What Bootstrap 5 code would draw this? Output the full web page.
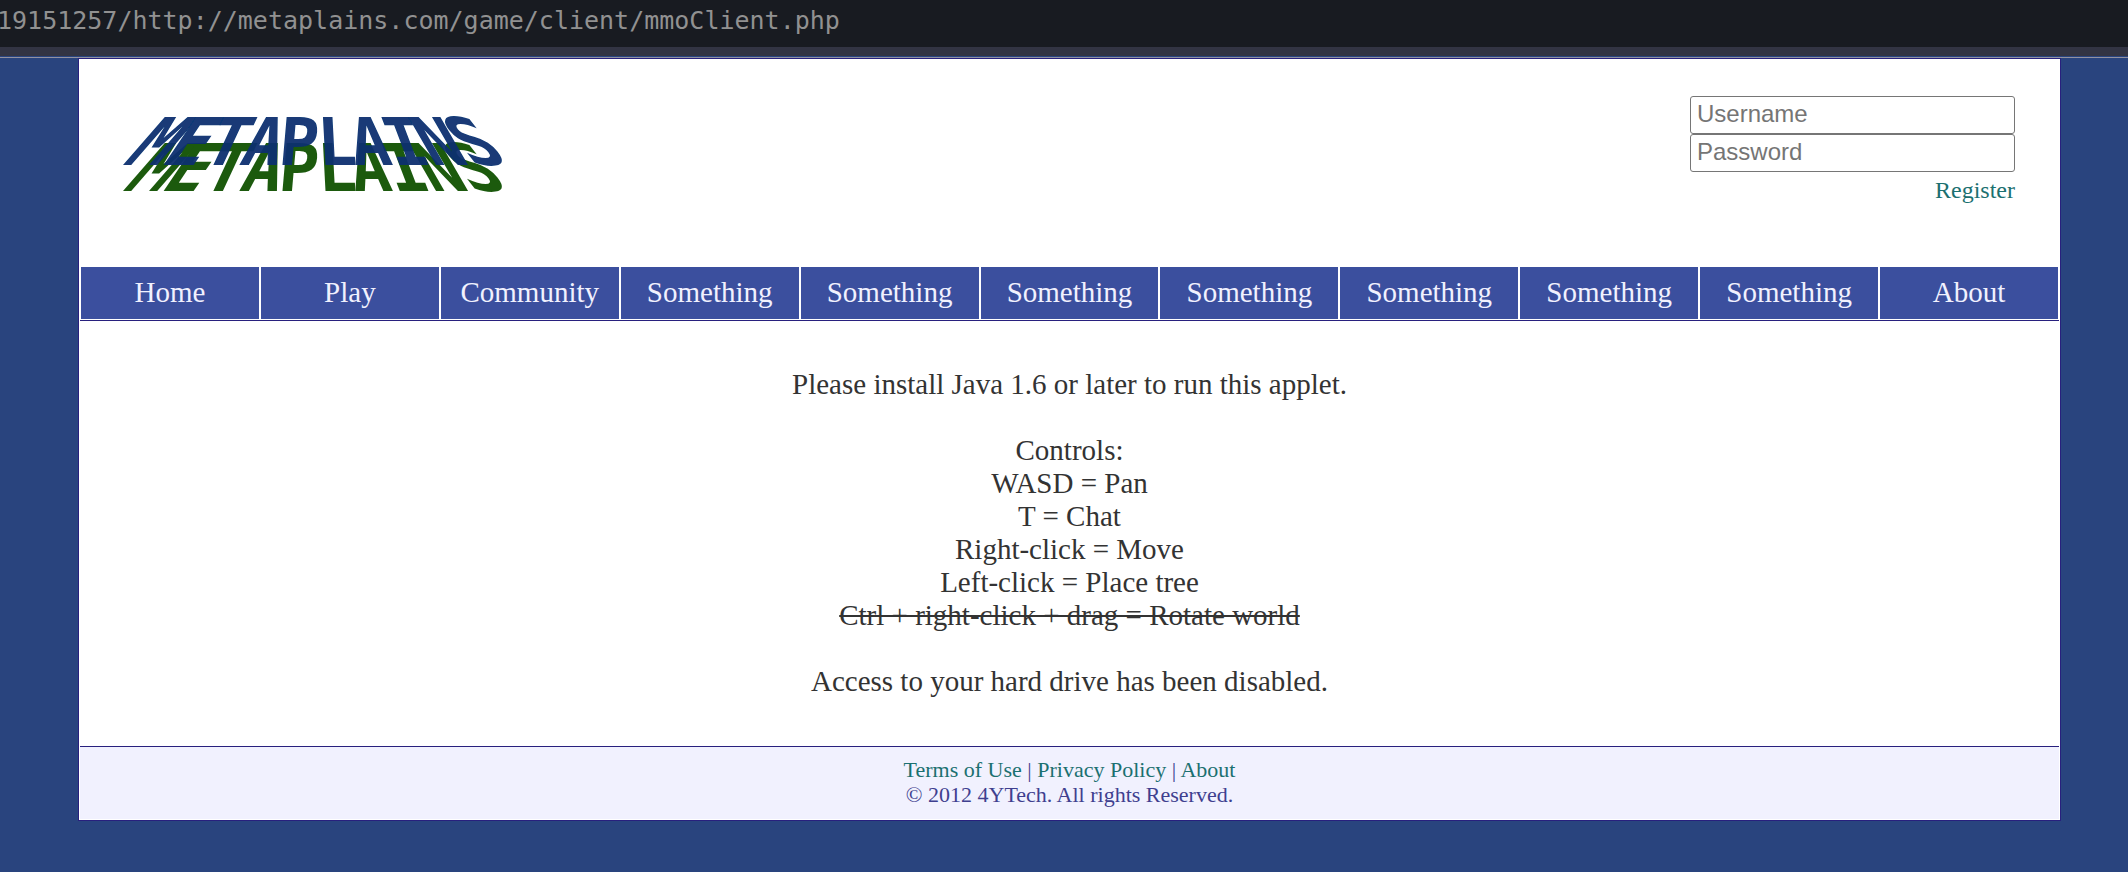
<!DOCTYPE html>
<html lang="en">
<head>
<meta charset="utf-8">
<meta name="viewport" content="width=device-width, initial-scale=1">
<title>Metaplains</title>
<link href="https://cdn.jsdelivr.net/npm/bootstrap@5.3.0/dist/css/bootstrap.min.css" rel="stylesheet">
<style>
  body { background: #29447e; color: #333; font-family: "Liberation Serif", serif; font-size: 29px; line-height: 33px; }
  a { color: #1b7070; }
  .address-bar { background: #181b21; color: #919191; height: 47px; line-height: 42px; font-family: "DejaVu Sans Mono", monospace; font-size: 25px; }
  .address-text { margin-left: -3px; }
  .toolbar-edge { background: #323443; height: 9px; margin-bottom: 1px; }
  .page-edge { background: #9292a0; height: 1px; }
  .sheet { margin: 0 67px 0 78px; padding: 1px; background: #fff; border: 1px solid #28207e; }
  .masthead { min-height: 207px; padding: 36px 44px 0 30px; }
  .brand-logo { width: 410px; height: 110px; margin-top: 4px; }
  .brand-logo text { font-family: "DejaVu Sans Mono", monospace; font-weight: bold; font-size: 66px; text-anchor: middle; }
  .login { width: 325px; }
  .login input { height: 38px; padding: 0 6px 2px; border: 1px solid #767676; border-radius: 3px; background: #fff; color: #222; font: 24px "Liberation Sans", sans-serif; }
  .login input::placeholder { color: #757575; opacity: 1; }
  .login a { font-size: 24px; line-height: 36px; }
  .main-menu { border-bottom: 1px solid #28207e; padding-bottom: 1px; }
  .main-menu li { padding: 0 1px; }
  .main-menu a { background: #3b4f9e; color: #f1f1fe; height: 52px; line-height: 50px; }
  .applet-note { padding: 47px 16px 48px; }
  .applet-note p { margin-bottom: 33px; }
  .site-footer { background: #f1f1fe; border-top: 1px solid #28207e; color: #3f3f8f; font-size: 22px; line-height: 25px; padding: 10px 16px 12px; }
</style>
</head>
<body>
  <div class="address-bar overflow-hidden text-nowrap">
    <div class="address-text">19151257/http://metaplains.com/game/client/mmoClient.php</div>
  </div>
  <div class="toolbar-edge"></div>
  <div class="page-edge"></div>

  <div class="sheet">
    <header class="masthead d-flex flex-wrap justify-content-between align-items-start">
      <a href="#" aria-label="Metaplains home">
        <svg class="brand-logo d-block" viewBox="0 0 410 110" role="img" aria-label="Metaplains">
          <defs>
            <filter id="soften"><feGaussianBlur stdDeviation="0.7"/></filter>
            <g id="wordmark">
              <text transform="translate(30 0) skewX(-41)">M</text>
              <text transform="translate(68 0) skewX(-34)">E</text>
              <text transform="translate(108 0) skewX(-25)">T</text>
              <text transform="translate(148 0) skewX(-16)">A</text>
              <text transform="translate(187 0) skewX(-5)">P</text>
              <text transform="translate(228 0) skewX(3)">L</text>
              <text transform="translate(264 0) skewX(11)">A</text>
              <text transform="translate(304 0) skewX(21)">I</text>
              <text transform="translate(342 0) skewX(30)">N</text>
              <text transform="translate(382 0) skewX(38)">S</text>
            </g>
          </defs>
          <g filter="url(#soften)">
            <use href="#wordmark" y="91" fill="#1c5a10"/>
            <use href="#wordmark" y="65" fill="#083070" opacity=".95"/>
          </g>
        </svg>
      </a>
      <form class="login d-flex flex-column" onsubmit="return false">
        <input type="text" placeholder="Username" aria-label="Username">
        <input type="password" placeholder="Password" aria-label="Password">
        <a href="#" class="align-self-end text-decoration-none">Register</a>
      </form>
    </header>

    <nav class="main-menu" aria-label="Main">
      <ul class="list-unstyled row g-0 mb-0 text-center">
        <li class="col"><a href="#" class="d-block text-decoration-none">Home</a></li>
        <li class="col"><a href="#" class="d-block text-decoration-none">Play</a></li>
        <li class="col"><a href="#" class="d-block text-decoration-none">Community</a></li>
        <li class="col"><a href="#" class="d-block text-decoration-none">Something</a></li>
        <li class="col"><a href="#" class="d-block text-decoration-none">Something</a></li>
        <li class="col"><a href="#" class="d-block text-decoration-none">Something</a></li>
        <li class="col"><a href="#" class="d-block text-decoration-none">Something</a></li>
        <li class="col"><a href="#" class="d-block text-decoration-none">Something</a></li>
        <li class="col"><a href="#" class="d-block text-decoration-none">Something</a></li>
        <li class="col"><a href="#" class="d-block text-decoration-none">Something</a></li>
        <li class="col"><a href="#" class="d-block text-decoration-none">About</a></li>
      </ul>
    </nav>

    <main class="applet-note text-center">
      <p>Please install Java 1.6 or later to run this applet.</p>
      <p>Controls:<br>WASD = Pan<br>T = Chat<br>Right-click = Move<br>Left-click = Place tree<br><s>Ctrl + right-click + drag = Rotate world</s></p>
      <p class="mb-0">Access to your hard drive has been disabled.</p>
    </main>

    <footer class="site-footer text-center">
      <div><a href="#" class="text-decoration-none">Terms of Use</a> | <a href="#" class="text-decoration-none">Privacy Policy</a> | <a href="#" class="text-decoration-none">About</a></div>
      <div>© 2012 4YTech. All rights Reserved.</div>
    </footer>
  </div>
<script src="https://cdn.jsdelivr.net/npm/bootstrap@5.3.0/dist/js/bootstrap.bundle.min.js"></script>
</body>
</html>
